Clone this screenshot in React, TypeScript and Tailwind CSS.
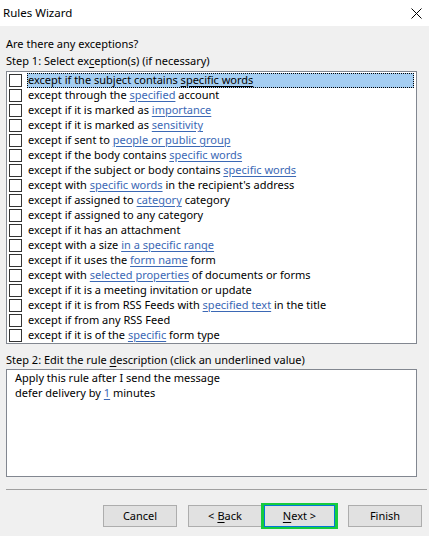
import React from "react";

type Part = string | { link: string };
const rows: Part[][] = [
  ["except if the subject contains ", { link: "specific words" }],
  ["except through the ", { link: "specified" }, " account"],
  ["except if it is marked as ", { link: "importance" }],
  ["except if it is marked as ", { link: "sensitivity" }],
  ["except if sent to ", { link: "people or public group" }],
  ["except if the body contains ", { link: "specific words" }],
  ["except if the subject or body contains ", { link: "specific words" }],
  ["except with ", { link: "specific words" }, " in the recipient's address"],
  ["except if assigned to ", { link: "category" }, " category"],
  ["except if assigned to any category"],
  ["except if it has an attachment"],
  ["except with a size ", { link: "in a specific range" }],
  ["except if it uses the ", { link: "form name" }, " form"],
  ["except with ", { link: "selected properties" }, " of documents or forms"],
  ["except if it is a meeting invitation or update"],
  ["except if it is from RSS Feeds with ", { link: "specified text" }, " in the title"],
  ["except if from any RSS Feed"],
  ["except if it is of the ", { link: "specific" }, " form type"],
];

function Row({ parts, selected }: { parts: Part[]; selected?: boolean }) {
  return (
    <div className="h-[15px] flex items-center relative">
      <div className="w-[13px] h-[13px] border border-[#333333] bg-white ml-[2px] shrink-0" />
      <div
        className={
          "ml-[5px] h-[15px] flex items-center pl-[1px] pr-[2px] pb-[1px] whitespace-pre " +
          (selected ? "flex-1 bg-[#a5cef2] outline outline-1 outline-dotted outline-black -outline-offset-1 mr-[2px]" : "")
        }
      >
        {parts.map((p, i) =>
          typeof p === "string" ? (
            <span key={i}>{p}</span>
          ) : (
            <span
              key={i}
              className={"underline underline-offset-2 " + (selected ? "text-black" : "text-[#3b68b5]")}
            >
              {p.link}
            </span>
          )
        )}
      </div>
    </div>
  );
}

function Btn({ children, primary }: { children: React.ReactNode; primary?: boolean }) {
  return (
    <div
      className={
        "h-[22px] flex items-center justify-center bg-[#e1e1e1] border " +
        (primary ? "w-[71px] h-[20px] border-[#0078d7]" : "w-[74px] border-[#adadad]")
      }
    >
      {children}
    </div>
  );
}

export default function App() {
  return (
    <div
      className="w-[429px] h-[536px] bg-[#f0f0f0] text-[11px] leading-[16px] text-black overflow-hidden"
      style={{ fontFamily: '"Noto Sans", "Open Sans", sans-serif' }}
    >
      <div className="h-[26px] bg-white flex items-center justify-between pl-[3px] pr-[6px]">
        <span className="text-[11.5px]">Rules Wizard</span>
        <svg width="11" height="11" viewBox="0 0 11 11" className="mr-[1px]">
          <path d="M0.5 0.5 L10.5 10.5 M10.5 0.5 L0.5 10.5" stroke="#000" strokeWidth="1" />
        </svg>
      </div>
      <div className="px-[6px] pt-[10px]">
        <div className="h-[16px]">Are there any exceptions?</div>
        <div className="h-[16px] mt-[1px]">
          Step 1: Select ex<span className="underline underline-offset-2">c</span>eption(s) (if necessary)
        </div>
        <div className="mt-[2px] h-[273px] bg-white border border-[#828790] pt-[1px] w-[411px]">
          {rows.map((r, i) => (
            <Row key={i} parts={r} selected={i === 0} />
          ))}
        </div>
        <div className="h-[16px] mt-[8px]">
          Step 2: Edit the rule <span className="underline underline-offset-2">d</span>escription (click an underlined value)
        </div>
        <div className="mt-[1px] h-[108px] w-[411px] bg-white border border-[#828790] pl-[8px] pt-0 leading-[15px]">
          <div>Apply this rule after I send the message</div>
          <div>
            defer delivery by <span className="underline underline-offset-2 text-[#3b68b5]">1</span> minutes
          </div>
        </div>
      </div>
      <div className="ml-[6px] mr-[2px] mt-[12px] h-[1px] bg-[#a0a0a0]" />
      <div className="flex items-center mt-[13px] pl-[103px]">
        <Btn>Cancel</Btn>
        <div className="ml-[11px]">
          <Btn>
            &lt; <span className="underline underline-offset-2 ml-[3px]">B</span>ack
          </Btn>
        </div>
        <div className="-ml-[1px] w-[77px] h-[26px] border-[3px] border-[#17cc3e] flex items-center justify-center">
          <Btn primary>
            <span className="underline underline-offset-2">N</span>ext &gt;
          </Btn>
        </div>
        <div className="ml-[10px]">
          <Btn>Finish</Btn>
        </div>
      </div>
    </div>
  );
}
